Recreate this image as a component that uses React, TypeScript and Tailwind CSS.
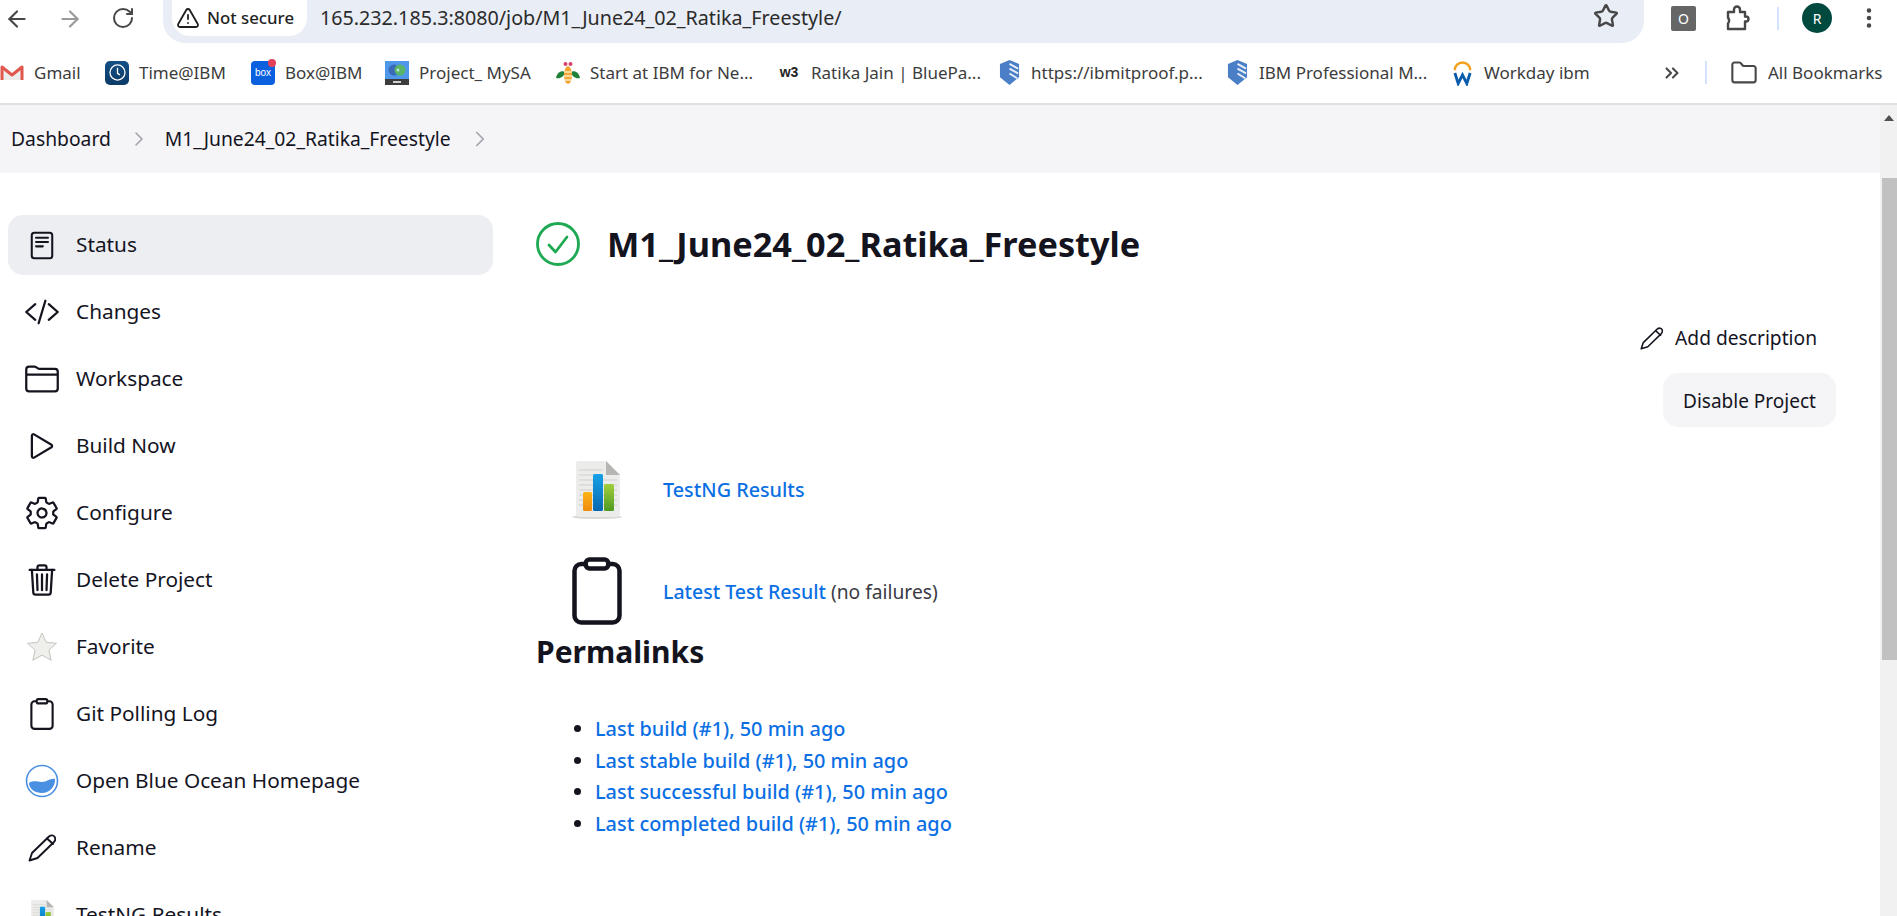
import { ArrowLeft, ArrowRight, RotateCw, Star, EllipsisVertical, TriangleAlert, Folder, ChevronsRight, ChevronRight } from "lucide-react";
import {
  IoClipboardOutline,
  IoCodeSlashOutline,
  IoFolderOutline,
  IoPlayOutline,
  IoSettingsOutline,
  IoTrashOutline,
} from "react-icons/io5";

const ui = "font-['Noto_Sans','Open_Sans',sans-serif]";

function GmailIcon() {
  return (
    <svg viewBox="0 0 24 17" className="h-[17px] w-[24px]">
      <path d="M2 3l10 8 10-8v13H2z" fill="#ededed" />
      <path d="M2 16V3l10 8 10-8v13" fill="none" stroke="#e0584d" strokeWidth="3" strokeLinejoin="round" />
    </svg>
  );
}

function TimeIcon() {
  return (
    <div className="grid h-6 w-6 place-items-center rounded-[5px] bg-gradient-to-b from-[#134f86] to-[#0d3b66]">
      <svg viewBox="0 0 24 24" className="h-[19px] w-[19px]" fill="none" stroke="#fff" strokeWidth="1.6">
        <circle cx="12" cy="12" r="9.500" />
        <path d="M12 6v7l3 2" />
      </svg>
    </div>
  );
}

function BoxIcon() {
  return (
    <div className="relative h-6 w-6 rounded-[4px] bg-[#0b60e0]">
      <span className="absolute inset-x-0 top-[6px] text-center font-['Liberation_Sans',sans-serif] text-[10px] leading-3 text-white">box</span>
      <span className="absolute -top-[2px] -right-[1px] h-[8px] w-[8px] rounded-full bg-[#e5405a]" />
    </div>
  );
}

function ProjectIcon() {
  return (
    <svg viewBox="0 0 24 24" className="h-6 w-6">
      <rect width="24" height="18" fill="#4f97e8" />
      <rect y="18" width="24" height="6" fill="#3d3d3d" />
      <circle cx="9" cy="9" r="5.500" fill="#3a69b8" />
      <circle cx="15" cy="9" r="5.500" fill="#58b56a" />
      <circle cx="13" cy="9" r="1.500" fill="#bfe3c6" />
      <rect x="8" y="20" width="8" height="2" fill="#cfcfcf" />
    </svg>
  );
}

function BeeIcon() {
  return (
    <svg viewBox="0 0 24 24" className="h-6 w-6">
      <path d="M9 11C5 9 1 12 0 17c4 1 8-1 9-6z" fill="#21803a" />
      <path d="M15 11c4-2 8 1 9 6-4 1-8-1-9-6z" fill="#21803a" />
      <ellipse cx="12" cy="14" rx="4" ry="9" fill="#f7a531" />
      <path d="M8.300 11h7.400M8 15h8M9 19h6" stroke="#fde9c6" strokeWidth="1.600" />
      <circle cx="9.500" cy="3" r="2" fill="#d9416a" />
      <circle cx="14.500" cy="3" r="2" fill="#d9416a" />
    </svg>
  );
}

function ShieldIcon() {
  return (
    <svg viewBox="0 0 22 26" className="h-[25px] w-[21px]">
      <path d="M11 0 21 4v14l-10 8L1 18V4z" fill="#4a7fc7" />
      <path d="M11 4l9 5M11 9l9 5M11 14l8 5" stroke="#e8eff9" strokeWidth="2" />
    </svg>
  );
}

function WorkdayIcon() {
  return (
    <svg viewBox="0 0 22 26" className="h-[26px] w-[21px]">
      <path d="M3 10a8 8 0 0 1 16 0" fill="none" stroke="#f5a11c" strokeWidth="2.600" />
      <path d="M3 13l3.500 11L11 15l4.500 9L19 13" fill="none" stroke="#0b5cad" strokeWidth="3" />
    </svg>
  );
}

const bookmarks = [
  { icon: <GmailIcon />, label: "Gmail", box: "w-[105px]" },
  { icon: <TimeIcon />, label: "Time@IBM", box: "w-[146px]" },
  { icon: <BoxIcon />, label: "Box@IBM", box: "w-[134px]" },
  { icon: <ProjectIcon />, label: "Project_ MySA", box: "w-[171px]" },
  { icon: <BeeIcon />, label: "Start at IBM for Ne...", box: "w-[221px]" },
  { icon: <span className="font-['Liberation_Sans',sans-serif] text-[14px] font-bold text-[#222]">w3</span>, label: "Ratika Jain | BluePa...", box: "w-[220px]" },
  { icon: <ShieldIcon />, label: "https://ibmitproof.p...", box: "w-[228px]" },
  { icon: <ShieldIcon />, label: "IBM Professional M...", box: "w-[225px]" },
  { icon: <WorkdayIcon />, label: "Workday ibm", box: "w-[212px]" },
];

function DocIcon() {
  return (
    <svg viewBox="0 0 28 34" className="h-[29px] w-[24px]" fill="none" stroke="#14141f" strokeWidth="2.400" strokeLinejoin="round" strokeLinecap="round">
      <rect x="2" y="2" width="24" height="30" rx="3" />
      <path d="M7 8h14M7 13h14M7 18h8" />
    </svg>
  );
}

function PencilIcon({ className }: { className: string }) {
  return (
    <svg viewBox="0 0 28 28" className={className} fill="none" stroke="#14141f" strokeWidth="1.900" strokeLinejoin="round" strokeLinecap="round">
      <path d="M1.500 26.500 4 19 21 2.500c2-1.700 4.800-1.400 5.800.6 1 1.900.5 3.400-.8 4.900L9.500 24z" />
      <path d="M19 4.500l6 5.500" />
    </svg>
  );
}

function FavoriteStar() {
  return (
    <svg viewBox="0 0 30 30" className="h-[30px] w-[30px]">
      <path d="M15 1l4.200 9.300 10.300 1-7.700 6.800 2.400 10.200-9.200-5.200-9.200 5.200 2.400-10.200L.5 11.300l10.300-1z" fill="#efefec" stroke="#c4c4c0" strokeWidth="1" />
    </svg>
  );
}

function BlueOcean() {
  return (
    <svg viewBox="0 0 34 34" className="h-[34px] w-[34px]">
      <circle cx="17" cy="17" r="15.500" fill="#fff" stroke="#4a90e2" strokeWidth="1.600" />
      <path d="M4 19c5-3 8-1 13-1s8-4 13-3c.6 8-6 14-13 14S4 25 4 19z" fill="#4a90e2" />
    </svg>
  );
}

function ChartDoc({ className }: { className: string }) {
  return (
    <svg viewBox="0 0 50 58" className={className}>
      <defs>
        <linearGradient id="chart-or" x1="0" y1="0" x2="0" y2="1"><stop offset="0" stopColor="#fbb515" /><stop offset="1" stopColor="#f08a0c" /></linearGradient>
        <linearGradient id="chart-bl" x1="0" y1="0" x2="0" y2="1"><stop offset="0" stopColor="#16a2e8" /><stop offset="1" stopColor="#0668b0" /></linearGradient>
        <linearGradient id="chart-gr" x1="0" y1="0" x2="0" y2="1"><stop offset="0" stopColor="#a2cf3c" /><stop offset="1" stopColor="#4f9a22" /></linearGradient>
      </defs>
      <ellipse cx="25" cy="56" rx="25" ry="2" fill="#d8d8d8" />
      <path d="M6 0h28l14 14v38a4 4 0 0 1-4 4H8a4 4 0 0 1-4-4V2a2 2 0 0 1 2-2z" fill="#ececea" />
      <path d="M34 0l14 14H34z" fill="#b5b5b3" />
      <path d="M7 9h24M7 14h24M7 19h38M7 24h38M7 29h38M7 34h38M7 39h38M7 44h38" stroke="#cfcfcd" strokeWidth="1" />
      <rect x="11" y="31" width="9" height="19" rx="1.500" fill="url(#chart-or)" />
      <rect x="21" y="13" width="10" height="37" rx="1.500" fill="url(#chart-bl)" />
      <rect x="32" y="23" width="10" height="27" rx="1.500" fill="url(#chart-gr)" />
    </svg>
  );
}

const sideItems = [
  { label: "Status", icon: <DocIcon />, active: true },
  { label: "Changes", icon: <IoCodeSlashOutline size={36} /> },
  { label: "Workspace", icon: <IoFolderOutline size={36} /> },
  { label: "Build Now", icon: <IoPlayOutline size={36} /> },
  { label: "Configure", icon: <IoSettingsOutline size={36} /> },
  { label: "Delete Project", icon: <IoTrashOutline size={36} /> },
  { label: "Favorite", icon: <FavoriteStar /> },
  { label: "Git Polling Log", icon: <IoClipboardOutline size={34} /> },
  { label: "Open Blue Ocean Homepage", icon: <BlueOcean /> },
  { label: "Rename", icon: <PencilIcon className="h-[28px] w-[28px]" /> },
  { label: "TestNG Results", icon: <ChartDoc className="h-[30px] w-[26px]" /> },
];

const permalinks = [
  "Last build (#1), 50 min ago",
  "Last stable build (#1), 50 min ago",
  "Last successful build (#1), 50 min ago",
  "Last completed build (#1), 50 min ago",
];

export default function App() {
  return (
    <div className={`flex h-[916px] w-[1897px] flex-col overflow-hidden bg-white text-[#14141f] ${ui}`}>
      {/* browser toolbar */}
      <div className="flex h-[48px] shrink-0 items-start">
        <div className="flex w-[163px] shrink-0 pt-[6px] pl-[4px]">
          <ArrowLeft className="h-[26px] w-[26px] text-[#474747]" strokeWidth={2} />
          <ArrowRight className="ml-[27px] h-[26px] w-[26px] text-[#9a9a9a]" strokeWidth={2} />
          <RotateCw className="ml-[28px] h-[24px] w-[24px] text-[#474747]" strokeWidth={2} />
        </div>
        <div className="flex h-[43px] w-[1481px] items-start rounded-b-[22px] bg-[#e9edf6] pr-[25px] pl-[9px]">
          <div className="flex h-[36px] w-[135px] items-center gap-[7px] rounded-b-[18px] bg-white pl-[4px] text-[16.800px] font-medium text-[#1f1f1f]">
            <TriangleAlert className="h-[24px] w-[24px]" strokeWidth={1.8} />
            <span>Not secure</span>
          </div>
          <span className="mt-[5px] ml-[13px] text-[19.700px] leading-[26px] text-[#2b2b2b]">165.232.185.3:8080/job/M1_June24_02_Ratika_Freestyle/</span>
          <Star className="mt-[3px] ml-auto h-[26px] w-[26px] text-[#474747]" strokeWidth={2.3} />
        </div>
        <div className="flex flex-1 items-center pt-[3px] pl-[27px]">
          <div className="grid h-[25px] w-[25px] place-items-center rounded-[2px] bg-[#666] text-[14px] text-white">O</div>
          <svg viewBox="0 0 26 26" className="ml-[28px] h-[26px] w-[26px]" fill="none" stroke="#474747" strokeWidth="2.400" strokeLinejoin="round">
            <path d="M4 7h6V4.500a3 3 0 0 1 6 0V7h5v4.500h1a2.500 2.500 0 0 1 0 5h-1V24H4v-5.500a5 5 0 0 0 0-6z" />
          </svg>
          <div className="ml-[27px] h-[23px] w-[2px] bg-[#d3e3fd]" />
          <div className="ml-[23px] grid h-[30px] w-[30px] place-items-center rounded-full bg-[#00493f] text-[14px] text-white">R</div>
          <EllipsisVertical className="ml-[24px] h-[26px] w-[26px] text-[#474747]" strokeWidth={2.2} />
        </div>
      </div>

      {/* bookmarks */}
      <div className="flex h-[55px] shrink-0 items-center pb-[6px] text-[17px] text-[#3c3c3c]">
        {bookmarks.map((b) => (
          <div key={b.label} className={`flex shrink-0 items-center ${b.box}`}>
            <div className="flex w-[24px] shrink-0 items-center justify-center">{b.icon}</div>
            <span className="ml-[10px] whitespace-nowrap">{b.label}</span>
          </div>
        ))}
        <ChevronsRight className="ml-[-1px] h-[22px] w-[22px] text-[#474747]" strokeWidth={2.2} />
        <div className="ml-[22px] h-[23px] w-[2px] bg-[#d3e3fd]" />
        <Folder className="ml-[23px] h-[28px] w-[28px] text-[#474747]" strokeWidth={1.8} />
        <span className="ml-[10px] whitespace-nowrap">All Bookmarks</span>
      </div>

      <div className="h-[2px] shrink-0 bg-[#e0e0e0]" />

      <div className="flex min-h-0 flex-1">
        <div className="min-w-0 flex-1">
          {/* breadcrumb */}
          <div className="flex h-[68px] items-center bg-[#f5f5f7] pl-[11px] text-[19.300px]">
            <span>Dashboard</span>
            <ChevronRight className="ml-[16px] h-[24px] w-[24px] text-[#a3a3ad]" strokeWidth={1.6} />
            <span className="ml-[14px]">M1_June24_02_Ratika_Freestyle</span>
            <ChevronRight className="ml-[16px] h-[26px] w-[26px] text-[#a3a3ad]" strokeWidth={1.6} />
          </div>

          <div className="flex">
            {/* side panel */}
            <nav className="flex w-[536px] shrink-0 flex-col gap-[7px] pt-[42px] pr-[43px] pl-[8px] text-[20.800px]">
              {sideItems.map((it) => (
                <div key={it.label} className={`flex h-[60px] shrink-0 items-center rounded-[15px] ${it.active ? "bg-[#edeef2]" : ""}`}>
                  <div className="flex w-[68px] shrink-0 justify-center pr-[1px]">{it.icon}</div>
                  <span className="whitespace-nowrap">{it.label}</span>
                </div>
              ))}
            </nav>

            {/* main */}
            <main className="min-w-0 flex-1 pt-[44px] pr-[44px]">
              <div className="flex h-[54px] items-center">
                <svg viewBox="0 0 44 44" className="h-[44px] w-[44px] shrink-0" fill="none" stroke="#1ea952" strokeLinecap="round" strokeLinejoin="round">
                  <circle cx="22" cy="22" r="20.500" strokeWidth="2.800" />
                  <path d="M13 23l6.500 7L31 15" strokeWidth="2.800" />
                </svg>
                <h1 className="ml-[27px] text-[34.300px] font-bold">M1_June24_02_Ratika_Freestyle</h1>
              </div>
              <div className="mt-[47px] flex justify-end">
                <div className="flex h-[40px] items-center text-[19.200px]">
                  <PencilIcon className="h-[23px] w-[23px]" />
                  <span className="mr-[19px] ml-[12px]">Add description</span>
                </div>
              </div>
              <div className="mt-[15px] flex justify-end">
                <div className="flex h-[54px] w-[173px] items-center justify-center rounded-[15px] bg-[#f5f5f7] pt-[2px] text-[19px]">Disable Project</div>
              </div>

              <div className="mt-[34px] flex h-[58px] items-center pl-[36px]">
                <ChartDoc className="h-[58px] w-[50px]" />
                <a className="ml-[41px] text-[19.800px] font-medium text-[#0b6fe4]">TestNG Results</a>
              </div>
              <div className="mt-[38px] flex h-[68px] items-center pl-[25px]">
                <IoClipboardOutline size={72} className="-my-[2px] shrink-0" />
                <p className="ml-[30px] pt-[2px] text-[19.200px] text-[#3a3a44]">
                  <a className="text-[19.500px] font-medium text-[#0b6fe4]">Latest Test Result</a> (no failures)
                </p>
              </div>
              <h2 className="mt-[5px] text-[30px] leading-[44px] font-bold">Permalinks</h2>
              <ul className="mt-[39px] list-disc pl-[59px] text-[19.900px] leading-[31.500px] font-medium text-[#0b6fe4] marker:text-[#14141f]">
                {permalinks.map((p) => (
                  <li key={p}>{p}</li>
                ))}
              </ul>
            </main>
          </div>
        </div>

        {/* page scrollbar */}
        <div className="flex w-[17px] shrink-0 flex-col bg-[#f1f1f1]">
          <div className="flex h-[73px] shrink-0 justify-center pt-[10px]">
            <div className="h-0 w-0 border-x-[5px] border-b-[6px] border-x-transparent border-b-[#505050]" />
          </div>
          <div className="ml-[2px] h-[482px] bg-[#c1c1c1]" />
        </div>
      </div>
    </div>
  );
}
